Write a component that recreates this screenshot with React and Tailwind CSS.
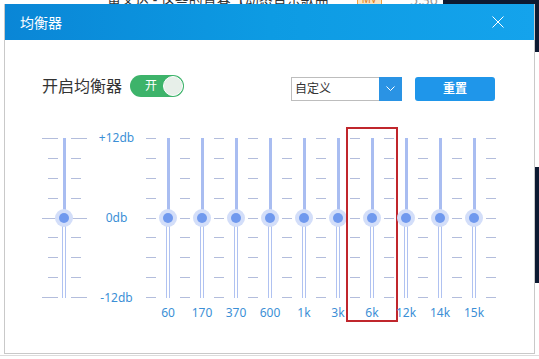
import React from "react";

const bands = ["60", "170", "370", "600", "1k", "3k", "6k", "12k", "14k", "15k"];
const rows = [0, 1, 2, 3, 4, 5, 6, 7, 8];

// one vertical slider: solid track above the knob, double line below it
const Track = ({ width }) => (
  <div className={`relative h-[160px] ${width} flex flex-col items-center`}>
    <div className="h-[80px] w-[3px] bg-[#a9bdf1]" />
    <div className="h-[80px] w-[4px] border-x border-[#b0c2f1]" />
    <div className="absolute left-1/2 top-[71px] -translate-x-1/2 w-[18px] h-[18px] rounded-full bg-[#d3def9] flex items-center justify-center">
      <div className="w-[10px] h-[10px] rounded-full bg-[#7099ee]" />
    </div>
  </div>
);

const TickCol = () => (
  <div className="w-[10px] h-[160px] flex flex-col justify-between">
    {rows.map((r) => (
      <div key={r} className="h-px w-full bg-[#b3bddc]" />
    ))}
  </div>
);

const PreampTicks = ({ side }) => (
  <div
    className={`w-[16px] h-[160px] flex flex-col justify-between ${
      side === "left" ? "items-end" : "items-start"
    }`}
  >
    {rows.map((r) => (
      <div
        key={r}
        className={`h-px bg-[#b3bddc] ${r % 4 === 0 ? "w-[16px]" : "w-[10px]"}`}
      />
    ))}
  </div>
);

const Toggle = () => (
  <div className="w-[54px] h-[22px] rounded-full bg-[#3db36a] flex items-center justify-between pl-[15px] pr-[1px]">
    <span className="text-[12px] leading-none text-white">开</span>
    <div className="w-[20px] h-[20px] rounded-full bg-[#e7efe9] border border-white" />
  </div>
);

export default function App() {
  return (
    <div
      className="relative w-[539px] h-[359px] bg-white overflow-hidden"
      style={{ fontFamily: "'Noto Sans', 'Noto Sans CJK SC', sans-serif" }}
    >
      {/* window behind the dialog */}
      <div className="absolute left-[107px] top-[-11px] flex items-center gap-[28px] text-[14px] text-[#333]">
        <span>黄义达 - 这些的青春【动态音乐歌曲</span>
        <span className="px-1 text-[10px] border border-[#f0a040] bg-[#fbe3c0] text-[#e08020]">MV</span>
        <span className="text-[#999]">5:36</span>
      </div>
      <div className="absolute left-[443px] top-0 w-[96px] h-[52px] bg-[#0d1a32]" />
      <div className="absolute left-[535px] top-[167px] w-[4px] h-[116px] bg-[#0d1a32]" />
      <div className="absolute left-0 right-0 top-[355px] h-px bg-[#dcdcdc]" />

      {/* dialog */}
      <div className="absolute left-[4px] top-[4px] w-[531px] h-[350px] bg-white border-x border-b border-[#c9c9c9] flex flex-col">
        <div className="h-[36px] shrink-0 bg-gradient-to-r from-[#0a86d6] via-[#0d9be3] to-[#14a3ec] flex items-center justify-between pl-[15px] pr-[30px]">
          <span className="text-[14px] text-white">均衡器</span>
          <svg width="12" height="12" viewBox="0 0 12 12">
            <path d="M0.5 0.5 L11.5 11.5 M11.5 0.5 L0.5 11.5" stroke="white" strokeWidth="1" />
          </svg>
        </div>

        <div className="mt-[35px] pl-[37px] pr-[39px] flex items-start justify-between">
          <div className="flex items-center gap-[8px]">
            <span className="text-[16px] leading-[22px] text-[#333]">开启均衡器</span>
            <Toggle />
          </div>
          <div className="mt-[2px] flex items-center gap-[13px]">
            <div className="w-[111px] h-[24px] border border-[#bdbdbd] flex">
              <span className="flex-1 pl-[3px] text-[12px] leading-[22px] text-[#333]">自定义</span>
              <div className="w-[23px] -my-px -mr-px bg-[#2a93e4] flex items-center justify-center">
                <svg width="9" height="6" viewBox="0 0 9 6">
                  <path d="M0.5 0.5 L4.5 4.5 L8.5 0.5" stroke="white" strokeWidth="1" fill="none" />
                </svg>
              </div>
            </div>
            <button className="w-[80px] h-[24px] rounded-[3px] bg-[#1f96ea] text-[12px] font-bold text-white">
              重置
            </button>
          </div>
        </div>

        <div className="mt-[37px] pl-[37px] flex items-start">
          {/* preamp */}
          <PreampTicks side="left" />
          <Track width="w-[12px]" />
          <div className="w-px" />
          <PreampTicks side="right" />

          <div className="w-[59px] h-[176px] -mt-[8px] flex flex-col justify-between items-center text-[12px] leading-4 text-[#3c8fd6]">
            <span>+12db</span>
            <span>0db</span>
            <span>-12db</span>
          </div>

          <TickCol />
          {bands.map((b) => (
            <div key={b} className="flex items-start">
              <div className="relative w-[24px] flex flex-col items-center">
                <Track width="w-[24px]" />
                <span className="mt-[7px] h-4 text-[12px] leading-4 text-[#3c8fd6] whitespace-nowrap">
                  {b}
                </span>
                {b === "6k" && (
                  <div className="absolute left-[-14px] right-[-14px] top-[-11px] h-[195px] border-2 border-[#c0262c]" />
                )}
              </div>
              <TickCol />
            </div>
          ))}
        </div>
      </div>
    </div>
  );
}
